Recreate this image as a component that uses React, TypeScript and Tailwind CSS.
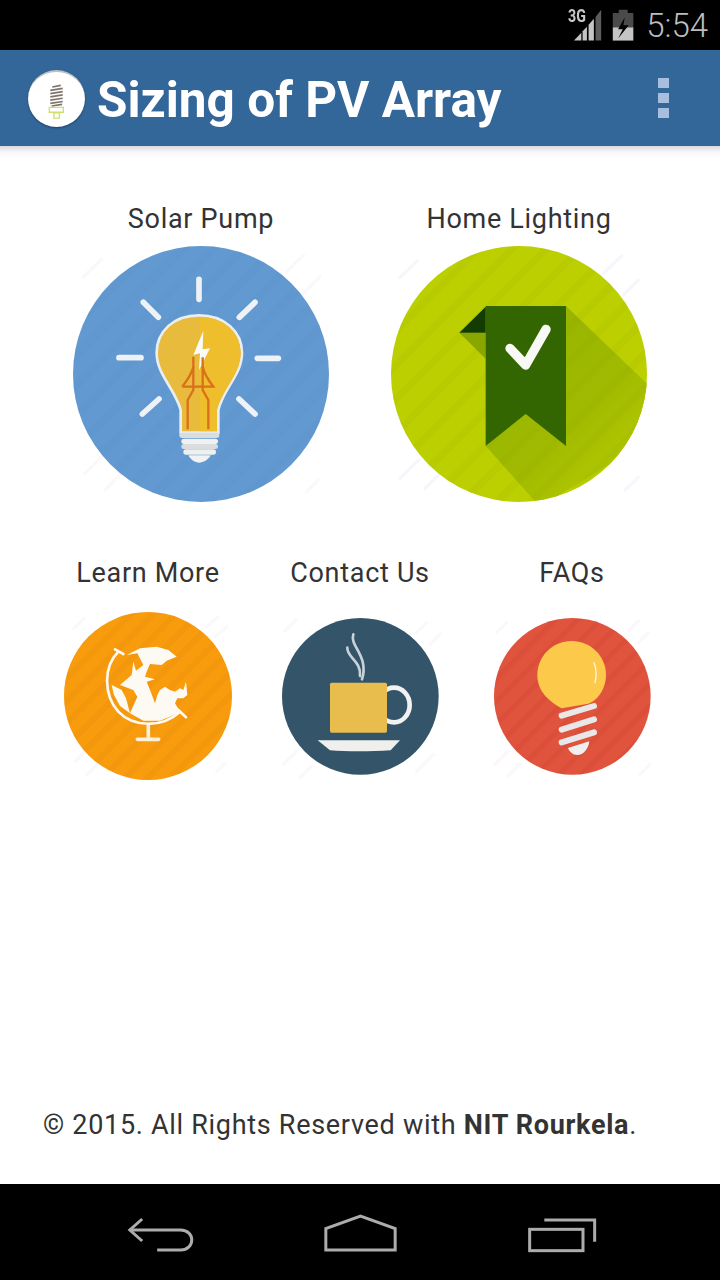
import React from "react";

const roboto = "font-['Roboto','Liberation_Sans',sans-serif]";

function Stripes({ id, cx, cy, r, color, gap = 66, band = 26, opacity = 0.05 }: { id: string; cx: number; cy: number; r: number; color: string; gap?: number; band?: number; opacity?: number }) {
  return (
    <>
      <defs>
        <pattern id={id} width={gap} height={gap} patternUnits="userSpaceOnUse" patternTransform="rotate(-45)">
          <rect width={gap} height={band} fill={color} opacity={opacity} />
        </pattern>
      </defs>
      <circle cx={cx} cy={cy} r={r} fill={`url(#${id})`} />
    </>
  );
}

function Streaks({ items, color = "#fbf8fc" }: { items: number[][]; color?: string }) {
  return (
    <g stroke={color} strokeWidth={10} strokeLinecap="round">
      {items.map((s, i) => (
        <line key={i} x1={s[0]} y1={s[1]} x2={s[2]} y2={s[3]} />
      ))}
    </g>
  );
}

function SolarIcon() {
  const rays = [
    [417, 118, 417, 178],
    [250, 187, 295, 232],
    [585, 187, 538, 232],
    [177, 353, 243, 353],
    [592, 355, 655, 355],
    [297, 477, 247, 522],
    [537, 477, 585, 522],
  ];
  return (
    <svg viewBox="39 18 768 768" className="h-[256px] w-[256px] overflow-visible blur-[0.5px]">
      <Streaks items={[[70, 110, 125, 58], [680, 95, 730, 45], [730, 160, 780, 110], [75, 700, 125, 650], [135, 750, 185, 700], [740, 755, 775, 720]]} />
      <circle cx="423" cy="402" r="384" fill="#6199d0" />
      <Stripes id="s1" cx={423} cy={402} r={384} color="#3f70a8" opacity={0.06} />
      <g stroke="#eef2f7" strokeWidth="17" strokeLinecap="round">
        {rays.map((s, i) => (
          <line key={i} x1={s[0]} y1={s[1]} x2={s[2]} y2={s[3]} />
        ))}
      </g>
      <path d="M417 226C340 226 290 275 290 338C290 405 345 445 362 510L362 578L475 578L475 510C490 445 546 405 546 338C546 275 494 226 417 226Z" fill="#e8bb3c" stroke="#e9eef2" strokeWidth="8" />
      <path d="M420 230C490 230 542 280 542 338C542 405 488 445 471 510L471 574L420 574Z" fill="#efbe2c" />
      <path d="M430 272L400 345L420 340L417 390L450 325L428 328Z" fill="#fbfbf7" />
      <g fill="none" stroke="#d9701a" strokeWidth="7">
        <path d="M383 568V480L400 450V350" />
        <path d="M445 568V480L428 450V352" />
        <path d="M367 440H460C445 420 432 400 428 380M367 440C382 420 396 400 400 380" />
      </g>
      <g fill="#d9dde0">
        <rect x="358" y="578" width="120" height="16" rx="8" />
        <rect x="364" y="596" width="110" height="16" rx="8" fill="#f0f1f1" />
        <rect x="364" y="612" width="110" height="15" rx="7" />
        <rect x="370" y="628" width="98" height="16" rx="8" fill="#eef0f0" />
      </g>
      <path d="M385 646H452C446 660 428 668 418 668C405 668 392 660 385 646Z" fill="#f2f2f2" />
    </svg>
  );
}

function LightingIcon() {
  return (
    <svg viewBox="33 18 768 768" className="h-[256px] w-[256px] overflow-visible blur-[0.5px]">
      <Streaks items={[[60, 112, 112, 62], [670, 100, 725, 48], [730, 165, 775, 120], [60, 715, 115, 660], [135, 745, 190, 690], [735, 750, 775, 712]]} color="#f6f6fb" />
      <defs>
        <clipPath id="lc">
          <circle cx="417" cy="402" r="384" />
        </clipPath>
        <linearGradient id="ls" x1="0.2" y1="0.1" x2="0.85" y2="0.9">
          <stop offset="0" stopColor="#96b300" />
          <stop offset="0.55" stopColor="#a0ba00" />
          <stop offset="1" stopColor="#b4ca00" />
        </linearGradient>
      </defs>
      <circle cx="417" cy="402" r="384" fill="#bccf00" />
      <g clipPath="url(#lc)">
        <path d="M558 198L810 440V600L480 800L317 618L437 522L558 618Z" fill="url(#ls)" />
        <path d="M238 278H317V356Z" fill="#8aa600" />
      </g>
      <Stripes id="s2" cx={417} cy={402} r={384} color="#7f9a00" gap={72} band={22} opacity={0.08} />
      <path d="M317 198H558V618L437 522L317 618Z" fill="#336600" />
      <path d="M317 200L238 278H317Z" fill="#123c00" />
      <path d="M390 325L437 375L498 268" fill="none" stroke="#f8f9f5" strokeWidth="28" strokeLinecap="round" strokeLinejoin="round" />
    </svg>
  );
}

function GlobeIcon() {
  return (
    <svg viewBox="42 36 504 504" className="h-[168px] w-[168px] overflow-visible blur-[0.5px]">
      <Streaks items={[[72, 85, 102, 55], [470, 80, 505, 50], [495, 110, 530, 80], [75, 485, 110, 450], [110, 525, 140, 495], [500, 515, 525, 490]]} />
      <circle cx="294" cy="288" r="252" fill="#f89c0e" />
      <Stripes id="s3" cx={294} cy={288} r={252} color="#c86a00" gap={48} band={18} opacity={0.1} />
      <g transform="translate(150 120)" fill="#fdfaf4">
        <path d="M80 45L120 25L170 20L205 30L230 50L200 62L185 75L150 72L140 95L135 110L165 118L140 125L150 150L165 190L172 165L180 150L195 140L210 150L225 155L240 145L250 150L258 125L262 165L250 175L232 175L225 190L240 215L215 228L180 242L130 242L90 220L112 170L100 150L60 135L95 105L100 65L108 92L130 75L112 40Z" />
        <path d="M35 135L65 150L78 175L90 220L60 198L42 165Z" />
        <path d="M55 35C10 80 10 165 55 215C100 262 185 265 240 215" fill="none" stroke="#fdfaf4" strokeWidth="8" />
        <path d="M45 28L70 42M235 210L258 232" stroke="#fdfaf4" strokeWidth="8" strokeLinecap="round" />
        <path d="M145 258V295M112 298H176" stroke="#fdf0da" strokeWidth="11" strokeLinecap="round" />
      </g>
    </svg>
  );
}

function CupIcon() {
  return (
    <svg viewBox="36 51 471 471" className="h-[157px] w-[157px] overflow-visible blur-[0.5px]">
      <Streaks items={[[45, 90, 78, 58], [440, 95, 470, 65], [480, 130, 510, 100], [40, 490, 80, 450], [90, 530, 125, 495], [440, 510, 490, 460]]} color="#fcf7f9" />
      <circle cx="271" cy="286" r="235" fill="#34546a" />
      <ellipse cx="372" cy="312" rx="47" ry="52" fill="none" stroke="#f0f1f0" strokeWidth="14" />
      <rect x="180" y="245" width="171" height="150" rx="5" fill="#e8bd4e" />
      <path d="M143 418H390L362 448C300 452 230 452 180 448Z" fill="#eff0ee" />
      <g fill="none" stroke="#c9d2d8" strokeWidth="8" strokeLinecap="round">
        <path d="M250 100C238 135 298 165 276 235" />
        <path d="M232 140C230 170 275 180 270 225" />
      </g>
    </svg>
  );
}

function BulbIcon() {
  return (
    <svg viewBox="42 51 471 471" className="h-[157px] w-[157px] overflow-visible blur-[0.5px]">
      <Streaks items={[[50, 95, 80, 65], [445, 90, 475, 60], [475, 125, 505, 95], [45, 490, 85, 450], [85, 525, 120, 490], [480, 520, 510, 490]]} color="#fbf7fb" />
      <circle cx="277" cy="286" r="235" fill="#e0533d" />
      <Stripes id="s5" cx={277} cy={286} r={235} color="#a82a1a" gap={48} band={16} opacity={0.08} />
      <path d="M275 120C332 120 378 165 378 222C378 265 350 300 325 308L245 322C205 300 172 270 172 222C172 165 218 120 275 120Z" fill="#fdc94a" />
      <path d="M342 185C350 205 350 225 345 245" fill="none" stroke="#fdf5e0" strokeWidth="4" strokeLinecap="round" />
      <g stroke="#e9e7e8" strokeWidth="18" strokeLinecap="round">
        <line x1="245" y1="344" x2="342" y2="315" />
        <line x1="245" y1="386" x2="342" y2="355" />
        <line x1="245" y1="424" x2="342" y2="394" />
      </g>
      <path d="M264 441L328 421C325 445 310 462 292 462C278 462 268 452 264 441Z" fill="#f0efef" />
    </svg>
  );
}

function Logo() {
  return (
    <div className="h-[57px] w-[57px] rounded-full border-t-2 border-[#b9c0c6] bg-white shadow-[0_1px_2px_rgba(0,0,0,0.35)]">
      <svg viewBox="87 87 168 168" className="h-full w-full">
        <g stroke="#7e746c" strokeWidth="5" fill="none">
          <path d="M158 133L184 128M152 143L190 137M152 153L190 147M152 163L190 157M152 173L190 167M152 183L190 177M156 191L188 186" />
        </g>
        <path d="M149 195H192V210H149ZM163 212H180V228H163Z" fill="none" stroke="#cfe06a" strokeWidth="4" />
      </svg>
    </div>
  );
}

function StatusIcons() {
  return (
    <svg viewBox="280 20 190 105" className="h-[35px] w-[63px]">
      <path d="M283 118L305 94V118Z" fill="#c4c4c4" />
      <path d="M309 90L322 76V118H309Z" fill="#c4c4c4" />
      <path d="M327 70L343 52V118H327Z" fill="#c4c4c4" />
      <path d="M348 47L365 25V118H348Z" fill="#5c5c5c" />
      <path d="M418 25H445V35H462V78H400V35H418Z" fill="#4a4a4a" />
      <rect x="400" y="78" width="62" height="40" fill="#c4c4c4" />
      <path d="M436 48L416 84H430L416 112L448 72H432Z" fill="#000" />
    </svg>
  );
}

function Tile({ label, children }: { label: string; children: React.ReactNode }) {
  return (
    <div className="flex flex-col items-center">
      <div className="pt-[2px] text-[27px] leading-[34px] tracking-[0.7px] text-[#333333]">{label}</div>
      {children}
    </div>
  );
}

export default function App() {
  return (
    <div className={`flex h-[1280px] w-[720px] flex-col overflow-hidden bg-white ${roboto}`}>
      <div className="flex h-[50px] items-center justify-end bg-black pr-[12px]">
        <div className="relative flex items-center gap-[10px]">
          <span className="absolute left-[-5px] top-[6px] origin-left scale-x-[0.75] text-[19px] font-bold leading-[20px] text-[#c8c8c8]">3G</span>
          <StatusIcons />
          <span className="pt-[1px] text-[33px] font-light leading-[49px] text-[#bdbdbd]">5:54</span>
        </div>
      </div>

      <header className="flex h-[96px] items-center bg-[#336699] pl-[28px] pr-[51px]">
        <Logo />
        <h1 className="ml-[12px] pt-[4px] text-[49.5px] font-bold leading-[60px] text-white">Sizing of PV Array</h1>
        <div className="ml-auto flex flex-col gap-[5px]">
          <span className="h-[10px] w-[11px] bg-[#a8bede]" />
          <span className="h-[10px] w-[11px] bg-[#a8bede]" />
          <span className="h-[10px] w-[11px] bg-[#a8bede]" />
        </div>
      </header>

      <main className="flex flex-1 flex-col">
        <div className="h-[12px] bg-gradient-to-b from-[#dcdadc] via-[#f9f6fa] to-white" />
        <div className="mt-[42px] grid grid-cols-2 px-[42px]">
          <Tile label="Solar Pump">
            <div className="mt-[10px]">
              <SolarIcon />
            </div>
          </Tile>
          <Tile label="Home Lighting">
            <div className="mt-[10px]">
              <LightingIcon />
            </div>
          </Tile>
        </div>
        <div className="mt-[52px] grid grid-cols-3 px-[42px]">
          <Tile label="Learn More">
            <div className="mt-[22px] flex h-[168px] items-center">
              <GlobeIcon />
            </div>
          </Tile>
          <Tile label="Contact Us">
            <div className="mt-[22px] flex h-[168px] items-center">
              <CupIcon />
            </div>
          </Tile>
          <Tile label="FAQs">
            <div className="mt-[22px] flex h-[168px] items-center">
              <BulbIcon />
            </div>
          </Tile>
        </div>
        <p className="mt-auto pb-[41px] pl-[43px] text-[27px] leading-[36px] tracking-[0.7px] text-[#333333]">
          © 2015. All Rights Reserved with <b className="font-bold">NIT Rourkela</b>.
        </p>
      </main>

      <nav className="flex h-[96px] gap-[128px] bg-black pl-[127px]">
        <svg viewBox="80 -18 200 288" className="h-[96px] w-[67px]" fill="none" stroke="#acacac" strokeWidth="9">
          <path d="M125 87L88 120L125 153" />
          <path d="M88 120H240C285 120 285 180 240 180H170" />
        </svg>
        <svg viewBox="665 -18 230 288" className="h-[96px] w-[77px]" fill="none" stroke="#acacac" strokeWidth="9">
          <path d="M676 180V116L780 78L884 116V180Z" />
        </svg>
        <svg viewBox="1280 -18 210 288" className="h-[96px] w-[70px]" fill="none" stroke="#acacac" strokeWidth="9">
          <rect x="1288" y="118" width="160" height="64" />
          <path d="M1332 90H1483V155" />
        </svg>
      </nav>
    </div>
  );
}
